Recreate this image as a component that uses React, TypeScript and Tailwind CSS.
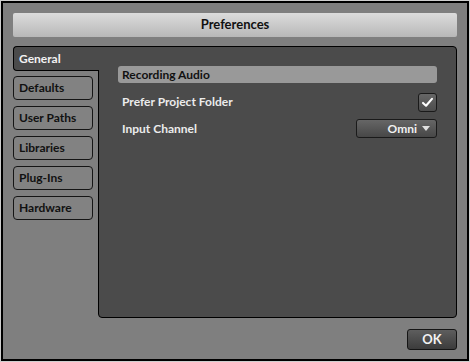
const font = { fontFamily: 'Lato, "Open Sans", sans-serif' };

const sideTabs = ['Defaults', 'User Paths', 'Libraries', 'Plug-Ins', 'Hardware'];

function Check() {
  return (
    <svg viewBox="0 0 16 16" className="w-[13px] h-[13px]">
      <path d="M2.5 8.5 L6.2 12 L13.5 3.5" fill="none" stroke="#ffffff" strokeWidth="2.6" strokeLinecap="round" strokeLinejoin="round" />
    </svg>
  );
}

export default function App() {
  return (
    <div className="w-[470px] h-[362px] border border-[#cfcfcf] bg-[#7f7f7f]" style={font}>
      <div className="h-full border-2 border-black flex flex-col px-[10px] pt-[10px] pb-[9px]">
        {/* title */}
        <div className="h-[24px] rounded-[2px] bg-gradient-to-b from-[#dcdcdc] to-[#b8b8b8] flex items-center justify-center text-[13px] font-bold text-[#111]">
          Preferences
        </div>

        <div className="mt-[9px] flex flex-1">
          {/* left tabs */}
          <div className="w-[85px] flex flex-col">
            <div className="relative z-10 -mr-px h-[25px] bg-[#4b4b4b] border border-r-0 border-black rounded-l-[4px] flex items-center pl-[5px] text-[12px] font-bold text-[#f2f2f2]">
              General
            </div>
            <div className="mt-[5px] flex flex-col gap-[6px]">
              {sideTabs.map((t) => (
                <div
                  key={t}
                  className="w-[80px] h-[24px] rounded-[4px] border border-[#151515] bg-[#828282] flex items-center pl-[5px] text-[12px] font-bold text-[#111]"
                >
                  {t}
                </div>
              ))}
            </div>
          </div>

          {/* content panel */}
          <div className="flex-1 bg-[#4b4b4b] border border-black rounded-tr-[4px] rounded-b-[4px] px-[19px] pt-[19px] h-[272px]">
            <div className="h-[17px] rounded-[3px] bg-[#999999] flex items-center pl-[4px] text-[12px] font-bold text-[#111]">
              Recording Audio
            </div>
            <div className="mt-[9px] h-[20px] flex items-center justify-between">
              <span className="pl-[4px] text-[12px] font-bold text-[#ececec]">Prefer Project Folder</span>
              <div className="w-[19px] h-[19px] rounded-[3px] border border-[#1a1a1a] bg-gradient-to-b from-[#666] to-[#4d4d4d] flex items-center justify-center">
                <Check />
              </div>
            </div>
            <div className="mt-[7px] h-[19px] flex items-center justify-between">
              <span className="pl-[4px] text-[12px] font-bold text-[#ececec]">Input Channel</span>
              <div className="w-[81px] h-[19px] rounded-[3px] border border-[#1a1a1a] bg-gradient-to-b from-[#666] to-[#474747] flex items-center justify-end gap-[5px] pr-[6px] text-[12px] font-bold text-[#f0f0f0]">
                Omni
                <span className="w-0 h-0 border-l-[4px] border-r-[4px] border-t-[5px] border-l-transparent border-r-transparent border-t-[#e0e0e0]" />
              </div>
            </div>
          </div>
        </div>

        {/* footer */}
        <div className="mt-[9px] flex justify-end">
          <div className="w-[50px] h-[21px] rounded-[3px] border border-[#151515] bg-gradient-to-b from-[#5e5e5e] to-[#3c3c3c] flex items-center justify-center text-[13px] font-bold text-[#f2f2f2]">
            OK
          </div>
        </div>
      </div>
    </div>
  );
}
